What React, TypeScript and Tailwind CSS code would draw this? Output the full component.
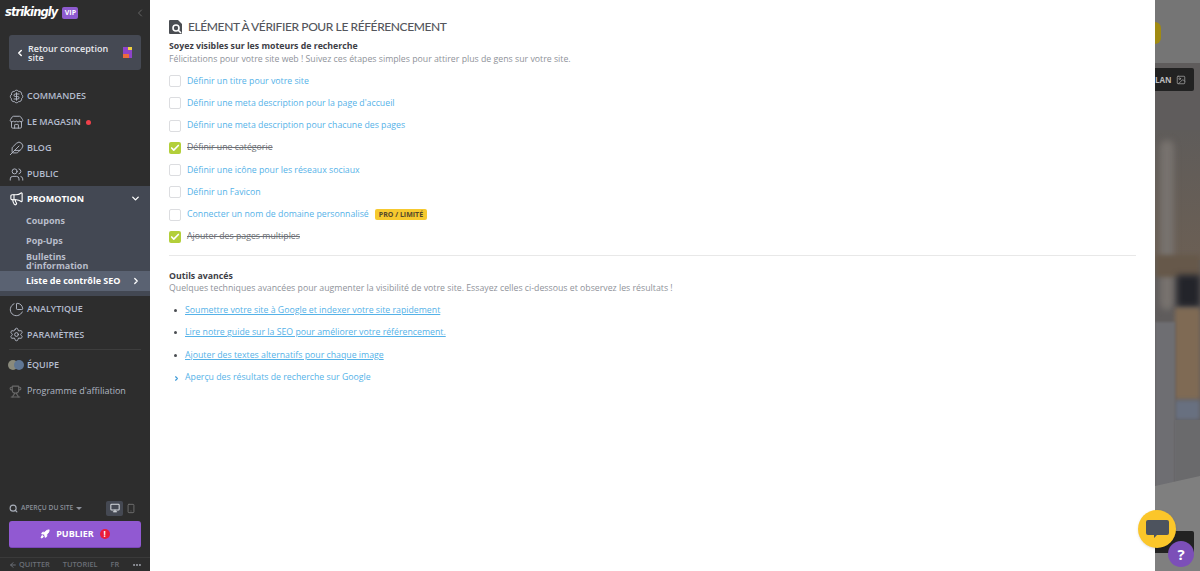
import { BadgeDollarSign, Store, Feather, Users, Megaphone, ChevronDown, ChevronRight, ChevronLeft, ChartPie, Settings, Trophy, Search, Monitor, Smartphone, Rocket, Check, ArrowLeft, Ellipsis, Image } from "lucide-react";

const topNav = [
  { label: "COMMANDES", icon: BadgeDollarSign, dot: false },
  { label: "LE MAGASIN", icon: Store, dot: true },
  { label: "BLOG", icon: Feather, dot: false },
  { label: "PUBLIC", icon: Users, dot: false },
];

const tasks = [
  { label: "Définir un titre pour votre site", done: false },
  { label: "Définir une meta description pour la page d'accueil", done: false },
  { label: "Définir une meta description pour chacune des pages", done: false },
  { label: "Définir une catégorie", done: true },
  { label: "Définir une icône pour les réseaux sociaux", done: false },
  { label: "Définir un Favicon", done: false },
  { label: "Connecter un nom de domaine personnalisé", done: false, badge: "PRO / LIMITÉ" },
  { label: "Ajouter des pages multiples", done: true },
];

const links = [
  "Soumettre votre site à Google et indexer votre site rapidement",
  "Lire notre guide sur la SEO pour améliorer votre référencement.",
  "Ajouter des textes alternatifs pour chaque image",
];

function Sidebar() {
  return (
    <aside className="w-[150px] h-full shrink-0 flex flex-col bg-[#2d2d2d] font-['Open_Sans',sans-serif]">
      <div className="h-[26px] pl-[5px] pr-[4px] flex items-center">
        <span className="text-[11.5px] leading-none font-bold italic text-white font-['DejaVu_Sans',sans-serif] tracking-[-0.9px]">strikingly</span>
        <span className="ml-[5px] w-[16px] h-[12px] rounded-[2px] bg-[#8e5bd0] text-[7px] leading-[12px] font-bold text-white text-center">VIP</span>
        <ChevronLeft className="ml-auto w-[12px] h-[12px] text-[#666]" />
      </div>

      <div className="mx-[9px] mt-[9px] h-[35px] rounded-[3px] bg-[#454953] flex items-center pl-[6px] pr-[9px]">
        <ChevronLeft className="w-[10px] h-[10px] text-white shrink-0" strokeWidth={3.5} />
        <span className="ml-[3px] text-[9px] leading-[9px] font-semibold text-[#e8eaee] w-[84px]">Retour conception site</span>
        <svg className="ml-auto w-[9px] h-[11px]" viewBox="0 0 9 11">
          <rect width="9" height="11" fill="#8e44c9" />
          <rect x="5" y="0" width="4" height="3" fill="#f0d040" />
          <rect x="0" y="7" width="6" height="4" fill="#ec6a3c" />
        </svg>
      </div>

      <nav className="mt-[13px] flex flex-col">
        {topNav.map((item) => {
          const Icon = item.icon;
          return (
            <div key={item.label} className="h-[26px] flex items-center pl-[9px]">
              <Icon className="w-[15px] h-[15px] text-[#b4bac6]" strokeWidth={1.5} />
              <span className="ml-[3px] text-[9px] font-semibold text-[#b4bcce]">{item.label}</span>
              {item.dot && <span className="ml-[5px] w-[5px] h-[5px] rounded-full bg-[#f0404a]" />}
            </div>
          );
        })}
      </nav>

      <div className="h-[110px] -mt-[1px] bg-[#434853] flex flex-col">
        <div className="h-[25px] flex items-center pl-[9px] pr-[9px]">
          <Megaphone className="w-[15px] h-[15px] text-white" strokeWidth={1.8} />
          <span className="ml-[3px] text-[9px] font-bold text-white">PROMOTION</span>
          <ChevronDown className="ml-auto w-[11px] h-[11px] text-white" strokeWidth={3} />
        </div>
        <div className="pl-[26px] h-[20px] flex items-center text-[9px] font-bold text-[#b9becb]">Coupons</div>
        <div className="pl-[26px] h-[20px] flex items-center text-[9px] font-bold text-[#b9becb]">Pop-Ups</div>
        <div className="pl-[26px] h-[20px] pt-[1px] text-[9px] leading-[9px] font-bold text-[#b9becb]">Bulletins<br />d'information</div>
        <div className="h-[20px] pl-[26px] pr-[9px] bg-[#5a6272] flex items-center text-[9px] font-bold text-white">
          Liste de contrôle SEO
          <ChevronRight className="ml-auto w-[10px] h-[10px]" strokeWidth={3} />
        </div>
      </div>

      <div className="flex flex-col">
        <div className="h-[26px] flex items-center pl-[9px]">
          <ChartPie className="w-[15px] h-[15px] text-[#b4bac6]" strokeWidth={1.5} />
          <span className="ml-[3px] text-[9px] font-semibold text-[#b4bcce]">ANALYTIQUE</span>
        </div>
        <div className="h-[25px] flex items-center pl-[9px]">
          <Settings className="w-[15px] h-[15px] text-[#b4bac6]" strokeWidth={1.5} />
          <span className="ml-[3px] text-[9px] font-semibold text-[#b4bcce]">PARAMÈTRES</span>
        </div>
        <div className="mx-[9px] mt-[2px] border-t border-[#3d3d3d]" />
        <div className="h-[30px] flex items-center pl-[8px]">
          <span className="flex w-[16px] h-[10px]">
            <span className="w-[10px] h-[10px] rounded-full bg-[#8a8a7c]" />
            <span className="-ml-[4px] w-[10px] h-[10px] rounded-full bg-[#5f7694]" />
          </span>
          <span className="ml-[3px] text-[9px] font-semibold text-[#b4bcce]">ÉQUIPE</span>
        </div>
        <div className="h-[22px] flex items-center pl-[9px]">
          <Trophy className="w-[13px] h-[13px] text-[#6a6a6a]" strokeWidth={2} />
          <span className="ml-[5px] text-[9px] text-[#b0b6c2]">Programme d'affiliation</span>
        </div>
      </div>

      <div className="mt-auto">
        <div className="flex items-center pl-[9px] pr-[14px] h-[16px]">
          <Search className="w-[9px] h-[9px] text-[#a8aeb9]" strokeWidth={3} />
          <span className="ml-[3px] text-[6.7px] text-[#8b909a] font-semibold">APERÇU DU SITE</span>
          <span className="ml-[3px] w-0 h-0 border-x-[3px] border-x-transparent border-t-[3px] border-t-[#8b909a]" />
          <span className="ml-auto w-[17px] h-[15px] rounded-[2px] bg-[#454953] flex items-center justify-center">
            <Monitor className="w-[10px] h-[10px] text-[#d8dbe0]" strokeWidth={2.5} />
          </span>
          <Smartphone className="ml-[3px] w-[10px] h-[11px] text-[#777]" strokeWidth={2} />
        </div>
        <div className="mx-[9px] mt-[5px] h-[27px] rounded-[3px] bg-[#9159d2] flex items-center justify-center border-b border-[#7a45b8]">
          <Rocket className="w-[10px] h-[10px] text-white fill-white" />
          <span className="ml-[6px] text-[9px] font-bold text-white">PUBLIER</span>
          <span className="ml-[6px] w-[10px] h-[10px] rounded-full bg-[#ea1c3a] text-[8px] leading-[10px] font-bold text-white text-center">!</span>
        </div>
        <div className="mt-[9px] h-[14px] border-t border-[#3a3a3a] flex items-center pl-[9px] text-[7.4px] font-semibold text-[#6b6f77]">
          <ArrowLeft className="w-[8px] h-[8px]" strokeWidth={3} />
          <span className="ml-[2px]">QUITTER</span>
          <span className="ml-[13px]">TUTORIEL</span>
          <span className="ml-[13px]">FR</span>
          <Ellipsis className="ml-[13px] w-[10px] h-[10px] text-[#a0a4ac]" strokeWidth={3} />
        </div>
      </div>
    </aside>
  );
}

function Checklist() {
  return (
    <main className="w-[1005px] h-full shrink-0 bg-white pt-[17px] pl-[19px] pr-[19px] font-['Open_Sans',sans-serif]">
      <div className="flex items-center h-[19px]">
        <svg className="w-[14px] h-[14px]" viewBox="0 0 14 14">
          <path d="M1 0h8l4 4v9a1 1 0 0 1-1 1H1a1 1 0 0 1-1-1V1a1 1 0 0 1 1-1z" fill="#4a4d52" />
          <circle cx="7" cy="8" r="3" fill="none" stroke="#fff" strokeWidth="1.6" />
          <path d="M9 10l3 3" stroke="#fff" strokeWidth="1.6" />
        </svg>
        <h1 className="ml-[5px] text-[12px] font-medium text-[#54565c] font-['Lato',sans-serif] tracking-[-0.4px]">ELÉMENT À VÉRIFIER POUR LE RÉFÉRENCEMENT</h1>
      </div>
      <div className="mt-[4px] text-[8.75px] leading-[13px] font-bold text-[#3e4046]">Soyez visibles sur les moteurs de recherche</div>
      <div className="text-[8.75px] leading-[13px] text-[#8f939a]">Félicitations pour votre site web ! Suivez ces étapes simples pour attirer plus de gens sur votre site.</div>

      <div className="mt-[4px] flex flex-col">
        {tasks.map((task) => (
          <div key={task.label} className="h-[22.25px] flex items-center">
            {task.done ? (
              <span className="w-[12px] h-[12px] rounded-[2px] bg-[#b3cf3a] flex items-center justify-center">
                <Check className="w-[10px] h-[10px] text-white" strokeWidth={4} />
              </span>
            ) : (
              <span className="w-[12px] h-[12px] rounded-[2px] border border-[#dcdde0] bg-white" />
            )}
            <span className={task.done ? "ml-[6px] text-[8.75px] text-[#6c6f75] line-through" : "ml-[6px] text-[8.75px] text-[#55b2e8]"}>{task.label}</span>
            {task.badge && (
              <span className="ml-[6px] h-[11px] px-[4px] rounded-[2px] bg-[#f6c92f] text-[7px] leading-[11px] font-bold text-[#55482a]">{task.badge}</span>
            )}
          </div>
        ))}
      </div>

      <div className="mt-[7px] border-t border-[#e8e8e8]" />

      <div className="mt-[14px] text-[8.75px] leading-[12px] font-bold text-[#3e4046]">Outils avancés</div>
      <div className="text-[8.75px] leading-[12px] text-[#8f939a]">Quelques techniques avancées pour augmenter la visibilité de votre site. Essayez celles ci-dessous et observez les résultats !</div>

      <ul className="mt-[5px] flex flex-col">
        {links.map((link) => (
          <li key={link} className="h-[22.5px] flex items-center pl-[5px]">
            <span className="w-[3px] h-[3px] rounded-full bg-[#4a4d52]" />
            <a className="ml-[8px] text-[8.75px] text-[#55b2e8] underline">{link}</a>
          </li>
        ))}
        <li className="h-[23px] flex items-center pl-[4px]">
          <ChevronRight className="w-[7px] h-[7px] text-[#3f9bd8]" strokeWidth={4} />
          <span className="ml-[5px] text-[8.75px] text-[#55b2e8]">Aperçu des résultats de recherche sur Google</span>
        </li>
      </ul>
    </main>
  );
}

// blurred site photo behind the modal overlay
function PreviewStrip() {
  return (
    <div className="flex-1 h-full relative overflow-hidden bg-[#5f5c5c]">
      <div className="absolute inset-x-0 top-[130px] h-[130px] bg-gradient-to-b from-[#5f5c5a] to-[#6b5f54]" />
      <div className="absolute left-[5px] w-[14px] top-[140px] h-[170px] rounded-full bg-[#77726e] blur-[3px]" />
      <div className="absolute inset-x-0 top-[255px] h-[22px] bg-[#66584a] blur-[2px]" />
      <div className="absolute left-[22px] right-0 top-[275px] h-[32px] bg-[#23242a] blur-[3px]" />
      <div className="absolute left-[20px] right-0 top-[308px] h-[92px] bg-[#7f6a54] blur-[2px]" />
      <div className="absolute left-[20px] right-0 top-[400px] h-[20px] bg-[#687080] blur-[2px]" />
      <div className="absolute left-[20px] right-0 top-[420px] h-[62px] bg-[#6a6a6c]" />
      <div className="absolute left-0 w-[20px] top-[322px] h-[165px] bg-[#6e6e72] blur-[1px]" />
      <div className="absolute inset-x-0 top-[476px] bottom-0 bg-[#7f7f7f] [clip-path:polygon(0_10px,100%_0,100%_100%,0_100%)]" />
      <div className="absolute inset-x-0 top-0 h-[63px] bg-[#757575]" />
      <div className="absolute left-0 top-[22px] w-[6px] h-[22px] rounded-r-full bg-[#a08a12]" />
      <div className="absolute left-0 top-[68px] h-[23px] w-[39px] rounded-r-[2px] bg-[#222] flex items-center text-[8px] font-bold text-[#bbb] font-['Open_Sans',sans-serif]">
        LAN
        <Image className="ml-[4px] w-[10px] h-[10px] text-[#999]" />
      </div>
      <div className="absolute left-0 top-[531px] h-[22px] w-[39px] rounded-r-[2px] bg-[#222]" />
    </div>
  );
}

export default function App() {
  return (
    <div className="relative w-[1200px] h-[571px] flex overflow-hidden">
      <Sidebar />
      <Checklist />
      <PreviewStrip />

      <div className="absolute left-[1138px] top-[510px] w-[38px] h-[38px] rounded-full bg-[#fbc62a] flex items-center justify-center shadow">
        <svg className="w-[23px] h-[18px]" viewBox="0 0 23 18">
          <path d="M2 0h19a2 2 0 0 1 2 2v11a2 2 0 0 1-2 2H11l-3 3v-3H2a2 2 0 0 1-2-2V2a2 2 0 0 1 2-2z" fill="#4d535e" />
        </svg>
      </div>
      <div className="absolute left-[1168px] top-[541px] w-[26px] h-[26px] rounded-full bg-[#7c4fb8] flex items-center justify-center text-[15px] font-bold text-white font-['Open_Sans',sans-serif]">?</div>
    </div>
  );
}
